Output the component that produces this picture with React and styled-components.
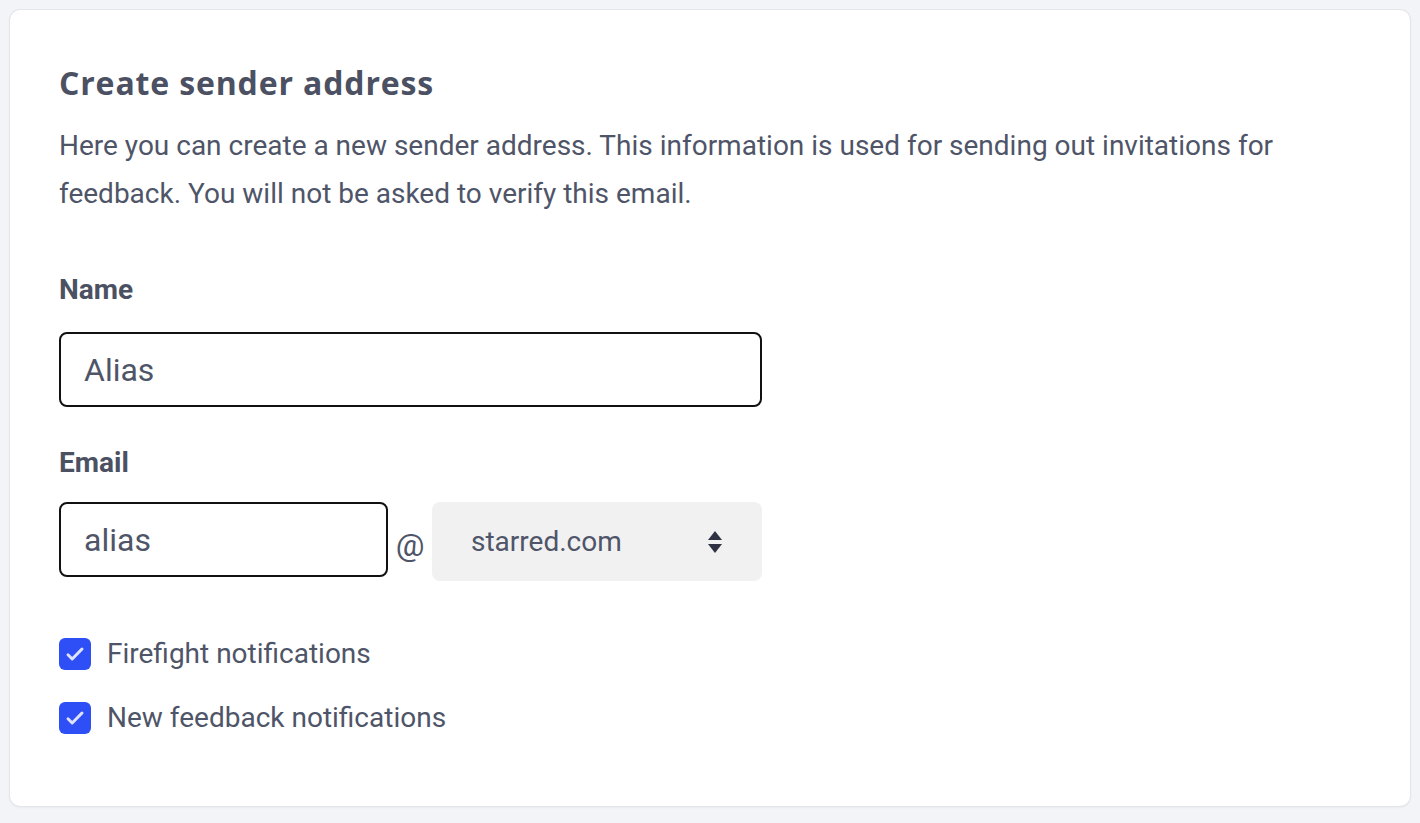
import React from "react";
import styled, { createGlobalStyle } from "styled-components";

const Global = createGlobalStyle`
  html, body { margin: 0; padding: 0; background: #f3f4f8; }
  body { font-family: Roboto, "Liberation Sans", sans-serif; color: #4b5162; }
  * { box-sizing: border-box; }
`;

const Page = styled.div`
  padding: 10px;
  min-height: 823px;
`;

const Card = styled.section`
  background: #fff;
  border-radius: 10px;
  box-shadow: 0 0 0 1px #e4e5ea, 0 1px 3px rgba(0, 0, 0, 0.08);
  padding: 53px 49px 0;
  height: 796px;
`;

const Title = styled.h1`
  margin: 0;
  font-family: "Open Sans", "Liberation Sans", sans-serif;
  font-weight: 700;
  font-size: 32px;
  line-height: 40px;
  color: #4b5162;
  letter-spacing: 0.85px;
`;

const Intro = styled.p`
  margin: 19px 0 0;
  font-size: 28px;
  line-height: 48px;
  color: #4f5568;
`;

const Label = styled.div`
  font-weight: 700;
  font-size: 28px;
  line-height: 30px;
  margin: ${(p) => p.$top}px 0 ${(p) => p.$bottom}px;
  color: #4b5162;
`;

const TextInput = styled.div`
  width: ${(p) => p.$w}px;
  height: 75px;
  border: 2px solid #111;
  border-radius: 8px;
  padding: 0 23px;
  display: flex;
  align-items: center;
  font-size: 32px;
  color: #4f5568;
`;

const EmailRow = styled.div`
  display: flex;
  align-items: flex-start;
`;

const At = styled.span`
  font-size: 32px;
  width: 44px;
  text-align: center;
  align-self: center;
  padding-top: 6px;
  color: #4f5568;
`;

const Select = styled.div`
  width: 330px;
  height: 79px;
  background: #f1f1f2;
  border-radius: 8px;
  display: flex;
  align-items: center;
  justify-content: space-between;
  padding: 0 39px 0 39px;
  font-size: 28px;
  color: #4f5568;
`;

const Checks = styled.div`
  margin-top: 57px;
  display: flex;
  flex-direction: column;
  gap: 32px;
`;

const CheckRow = styled.label`
  display: flex;
  align-items: center;
  gap: 16px;
  font-size: 28px;
  line-height: 32px;
  color: #4f5568;
`;

const Box = styled.span`
  width: 32px;
  height: 32px;
  border-radius: 6px;
  background: #2e4ff5;
  display: inline-flex;
  align-items: center;
  justify-content: center;
  flex-shrink: 0;
`;

const Check = () => (
  <Box>
    <svg width="32" height="32" viewBox="0 0 32 32" fill="none">
      <path d="M9 16.8l4.2 4.2L23 11" stroke="#dde2ff" strokeWidth="3" strokeLinecap="round" strokeLinejoin="round" />
    </svg>
  </Box>
);

const Arrows = () => (
  <svg width="16" height="26" viewBox="0 0 16 26">
    <path d="M8 2L15 11H1z" fill="#2d3142" />
    <path d="M8 24L15 15H1z" fill="#2d3142" />
  </svg>
);

export default function App() {
  return (
    <>
      <Global />
      <Page>
        <Card>
          <Title>Create sender address</Title>
          <Intro>
            Here you can create a new sender address. This information is used for sending out invitations for
            feedback. You will not be asked to verify this email.
          </Intro>
          <Label $top={57} $bottom={27}>Name</Label>
          <TextInput $w={703}>Alias</TextInput>
          <Label $top={41} $bottom={24}>Email</Label>
          <EmailRow>
            <TextInput $w={329}>alias</TextInput>
            <At>@</At>
            <Select>
              <span>starred.com</span>
              <Arrows />
            </Select>
          </EmailRow>
          <Checks>
            <CheckRow>
              <Check />
              Firefight notifications
            </CheckRow>
            <CheckRow>
              <Check />
              New feedback notifications
            </CheckRow>
          </Checks>
        </Card>
      </Page>
    </>
  );
}
